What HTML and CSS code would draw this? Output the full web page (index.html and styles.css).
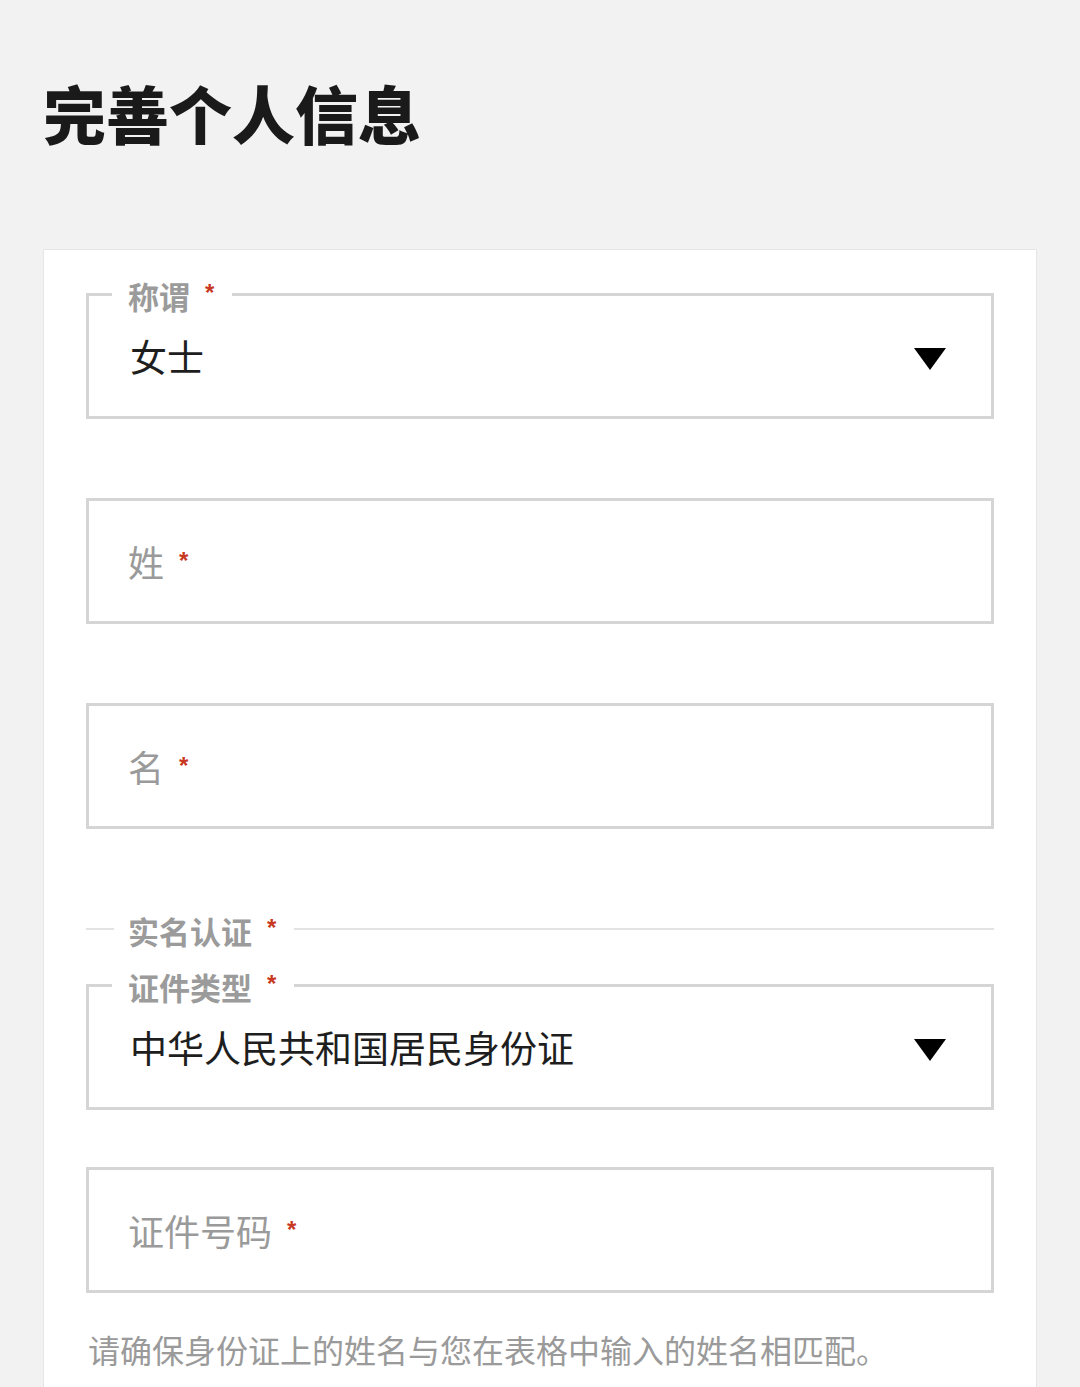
FILE: index.html
```html
<!DOCTYPE html>
<html lang="zh-CN">
<head>
<meta charset="utf-8">
<title>完善个人信息</title>
<link rel="stylesheet" href="styles.css">
</head>
<body>
<div class="page">
  <h1 class="title">完善个人信息</h1>
  <div class="card">
    <div class="field field-select">
      <div class="legend">称谓<span class="req">*</span></div>
      <span class="value">女士</span>
      <svg class="caret" width="32" height="22" viewBox="0 0 32 22"><polygon points="0,0 32,0 16,22" fill="#000"/></svg>
    </div>
    <div class="field field-gap">
      <span class="placeholder">姓<span class="req">*</span></span>
    </div>
    <div class="field field-gap">
      <span class="placeholder">名<span class="req">*</span></span>
    </div>
    <div class="divider">
      <span class="divider-line short"></span>
      <span class="divider-text">实名认证<span class="req">*</span></span>
      <span class="divider-line long"></span>
    </div>
    <div class="field field-select field-after-divider">
      <div class="legend">证件类型<span class="req">*</span></div>
      <span class="value">中华人民共和国居民身份证</span>
      <svg class="caret" width="32" height="22" viewBox="0 0 32 22"><polygon points="0,0 32,0 16,22" fill="#000"/></svg>
    </div>
    <div class="field field-gap-sm">
      <span class="placeholder">证件号码<span class="req">*</span></span>
    </div>
    <p class="hint">请确保身份证上的姓名与您在表格中输入的姓名相匹配。</p>
  </div>
</div>
</body>
</html>
```

FILE: styles.css
```css
html, body {
  margin: 0;
  padding: 0;
  background: #f2f2f2;
}
body {
  font-family: "Noto Sans CJK SC", "Noto Sans", sans-serif;
  color: #222;
}
.page {
  padding: 0 43px;
}
.title {
  margin: 0;
  padding-top: 75px;
  font-size: 63px;
  line-height: 74px;
  font-weight: 900;
  color: #1a1a1a;
  letter-spacing: 0;
}
.card {
  margin-top: 100px;
  background: #fff;
  border: 1px solid #e6e6e6;
  padding: 43px 42px 30px;
  min-height: 1200px;
}
.field {
  position: relative;
  box-sizing: border-box;
  height: 126px;
  border: 3px solid #d5d5d5;
  display: flex;
  align-items: center;
  padding: 0 45px 0 39px;
}
.field-gap {
  margin-top: 79px;
}
.field-gap-sm {
  margin-top: 57px;
}
.field-after-divider {
  margin-top: 37px;
}
.legend {
  position: absolute;
  left: 23px;
  top: -21px;
  padding: 0 18px 0 16px;
  background: #fff;
  font-size: 31px;
  line-height: 36px;
  font-weight: 700;
  color: #9b9b9b;
}
.value {
  flex: 1;
  font-size: 37px;
  line-height: 44px;
  color: #1e1e1e;
  padding-left: 2px;
}
.placeholder {
  font-size: 36px;
  line-height: 44px;
  color: #9a9a9a;
}
.req {
  color: #c8371f;
  font-family: "Liberation Sans", sans-serif;
  font-weight: 700;
  font-size: 24px;
  margin-left: 15px;
  vertical-align: 8px;
}
.caret {
  display: block;
  flex: none;
  margin-top: 6px;
}
.divider {
  display: flex;
  align-items: center;
  margin-top: 82px;
  height: 36px;
}
.divider-line {
  height: 2px;
  background: #e3e3e3;
}
.divider-line.short {
  width: 28px;
  margin-right: 14px;
}
.divider-line.long {
  flex: 1;
  margin-left: 18px;
}
.divider-text {
  font-size: 31px;
  line-height: 36px;
  font-weight: 700;
  color: #9b9b9b;
}
.hint {
  margin: 36px 0 0 2px;
  font-size: 32px;
  line-height: 40px;
  color: #9a9a9a;
}
```
